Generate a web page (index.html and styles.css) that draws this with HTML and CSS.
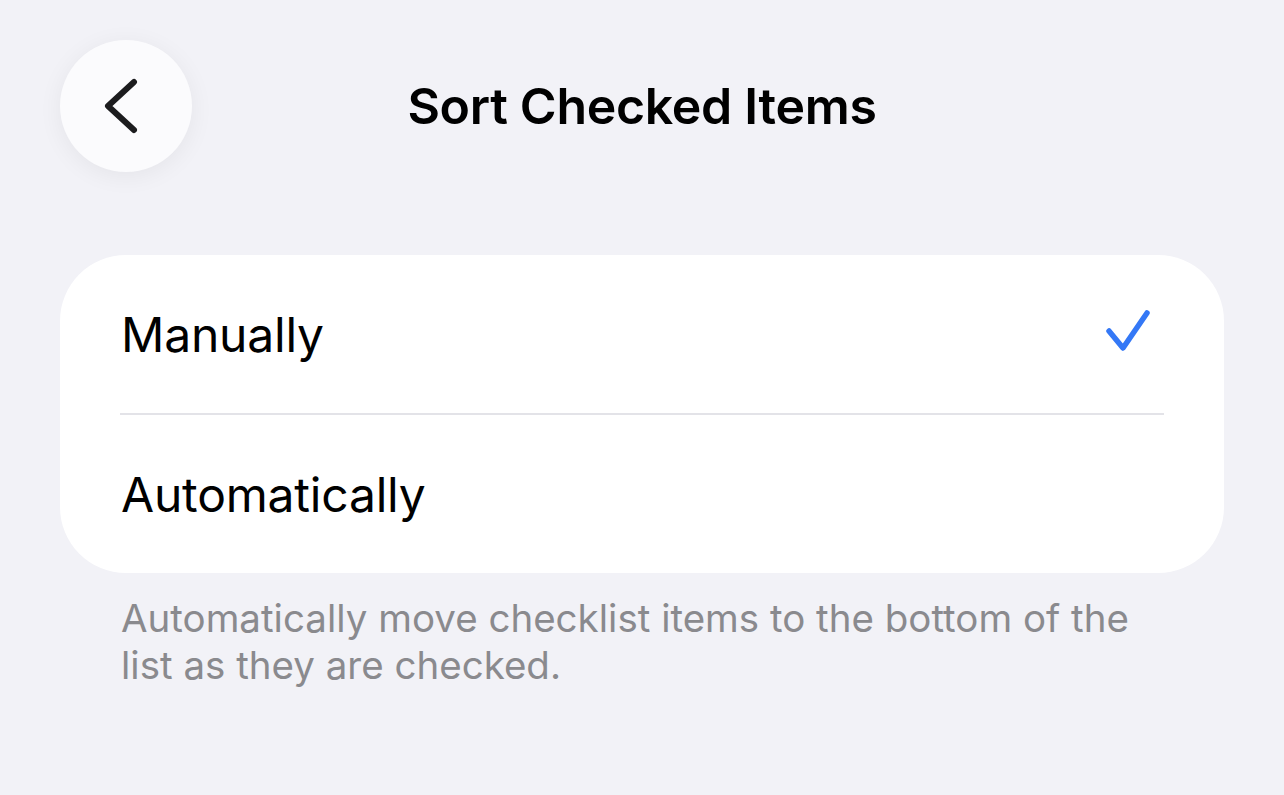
FILE: index.html
```html
<!DOCTYPE html>
<html lang="en">
<head>
    <meta charset="UTF-8">
    <meta name="viewport" content="width=device-width, initial-scale=1.0">
    <title>Sort Checked Items</title>
    <link rel="stylesheet" href="styles.css">
</head>
<body>
    <div class="screen">
        <header class="nav-bar">
            <button class="back-btn" aria-label="Back">
                <svg width="36" height="56" viewBox="0 0 36 56">
                    <path d="M30 4 L4 28 L30 52" fill="none" stroke="#1c1c1e" stroke-width="6" stroke-linecap="round" stroke-linejoin="round"/>
                </svg>
            </button>
            <h1 class="nav-title">Sort Checked Items</h1>
        </header>

        <div class="option-group">
            <div class="option-row">
                <span class="option-label">Manually</span>
                <svg class="check" width="46" height="44" viewBox="0 0 46 44">
                    <path d="M4 22 L18 39 L42 4" fill="none" stroke="#3478f6" stroke-width="5.5" stroke-linecap="round" stroke-linejoin="round"/>
                </svg>
            </div>
            <div class="divider"></div>
            <div class="option-row">
                <span class="option-label">Automatically</span>
            </div>
        </div>

        <p class="footer-note">Automatically move checklist items to the bottom of the list as they are checked.</p>
    </div>
</body>
</html>
```

FILE: styles.css
```css
* {
    margin: 0;
    padding: 0;
    box-sizing: border-box;
}

body {
    font-family: Inter, 'Liberation Sans', sans-serif;
    background: #f2f2f7;
    color: #000;
    min-height: 100vh;
}

.screen {
    padding: 40px 60px;
}

.nav-bar {
    display: grid;
    grid-template-columns: 132px 1fr 132px;
    align-items: center;
    height: 132px;
}

.back-btn {
    width: 132px;
    height: 132px;
    border-radius: 50%;
    border: none;
    background: #fbfbfd;
    box-shadow: 0 4px 24px rgba(0, 0, 0, 0.06);
    display: flex;
    align-items: center;
    justify-content: center;
    padding-right: 8px;
    cursor: pointer;
}

.nav-title {
    text-align: center;
    font-size: 50px;
    font-weight: 600;
    letter-spacing: -0.3px;
}

.option-group {
    margin-top: 83px;
    background: #fff;
    border-radius: 66px;
}

.option-row {
    display: flex;
    align-items: center;
    justify-content: space-between;
    height: 158px;
    padding: 0 73px 0 61px;
}

.option-label {
    font-size: 48px;
    font-weight: 400;
    letter-spacing: -0.2px;
}

.divider {
    height: 2px;
    background: #e3e3e8;
    margin: 0 60px;
}

.check {
    margin-top: -6px;
}

.footer-note {
    margin-top: 22px;
    padding: 0 60px 0 61px;
    font-size: 38.5px;
    line-height: 47px;
    color: #8a8a8e;
}
```
